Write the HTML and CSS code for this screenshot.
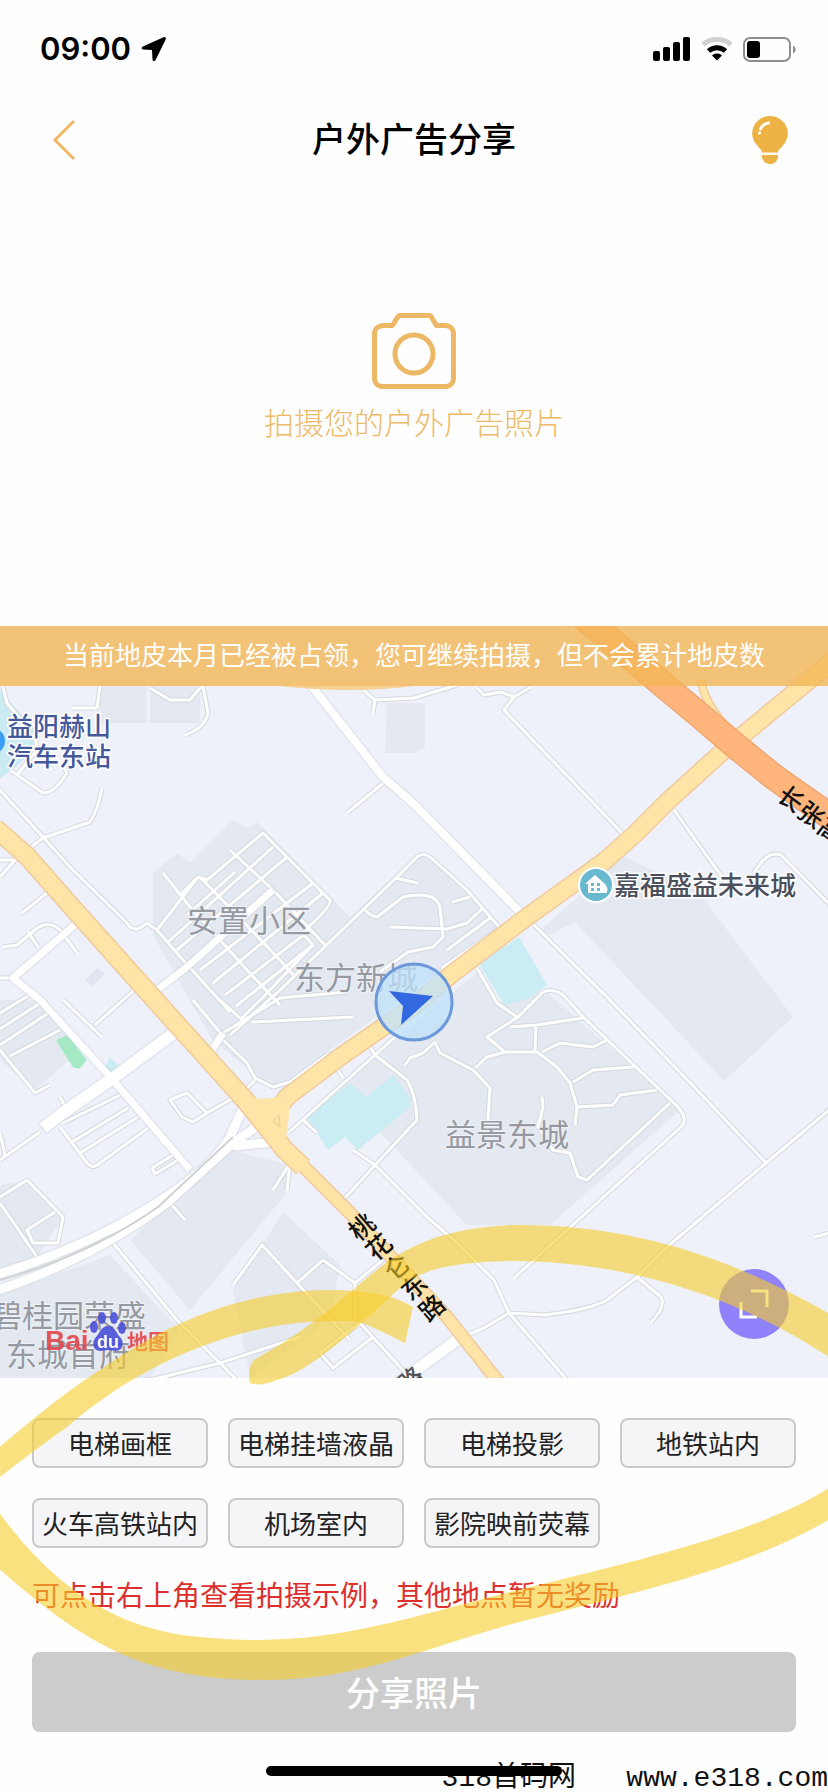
FILE: index.html
```html
<!DOCTYPE html>
<html lang="zh-CN">
<head>
  <meta charset="UTF-8">
  <meta name="viewport" content="width=device-width, initial-scale=1.0">
  <title>户外广告分享</title>
  <link rel="stylesheet" href="styles.css">
</head>
<body>
  <div class="page">

    <div class="status">
      <div class="status-left">
        <span class="status-time">09:00</span>
        <svg width="26" height="26" viewBox="0 0 26 26"><path d="M22.500 1.200 1.800 10.600c-1.700.8-1.400 2.900.4 3l8.800.3.500 9.600c.1 2 2.300 2.200 3.100.6L24.800 3.300c.6-1.500-.8-2.700-2.300-2.100z"/></svg>
      </div>
      <div class="status-right">
        <svg width="38" height="24" viewBox="0 0 38 24">
          <rect x="0" y="14" width="7" height="10" rx="2"/>
          <rect x="10" y="10" width="7" height="14" rx="2"/>
          <rect x="20" y="5" width="7" height="19" rx="2"/>
          <rect x="30" y="0" width="7" height="24" rx="2"/>
        </svg>
        <svg width="32" height="24" viewBox="0 0 32 24" fill="none" stroke-width="5">
          <path d="M2 7.500C10 .8 22 .8 30 7.500" stroke="#d0d0d0"/>
          <path d="M7.500 14c5-4.500 12-4.500 17 0" stroke="#000"/>
          <path d="M16 23.500l-5-5c3-2.600 7-2.600 10 0z" fill="#000"/>
        </svg>
        <svg width="53" height="25" viewBox="0 0 53 25">
          <rect x="1" y="1" width="46" height="23" rx="6" fill="none" stroke="#8e8e8e" stroke-width="2"/>
          <rect x="4" y="4" width="13" height="17" rx="3"/>
          <path d="M50 8.500c3.500 1.500 3.500 6.500 0 8z" fill="#8e8e8e"/>
        </svg>
      </div>
    </div>

    <header class="nav">
      <button type="button" class="nav-btn nav-btn--back" aria-label="返回">
        <svg width="24" height="42" viewBox="0 0 24 42"><path d="M22 2 3 21l19 19" fill="none" stroke="#edb866" stroke-width="3"/></svg>
      </button>
      <h1 class="nav-title">户外广告分享</h1>
      <button type="button" class="nav-btn nav-btn--tip" aria-label="拍摄示例">
        <svg width="36" height="48" viewBox="0 0 36 48">
          <path d="M18 0a17.500 17.500 0 0 0-12 30.500c2.500 2.500 3.800 3.500 4 6h16c.2-2.500 1.500-3.500 4-6A17.500 17.500 0 0 0 18 0z" fill="#edb244"/>
          <path d="M10 39h16c.5 4-2.500 9-8 9s-8.500-5-8-9z" fill="#edb244"/>
          <path d="M8.500 13c1.500-3.500 4-5.500 8-6" fill="none" stroke="#fff" stroke-width="3" stroke-linecap="round"/>
          <circle cx="7.500" cy="17" r="1.600" fill="#fff"/>
        </svg>
      </button>
    </header>

    <button type="button" class="shoot">
      <svg width="84" height="76" viewBox="0 0 84 76" fill="none" stroke="#edb866" stroke-width="5" stroke-linejoin="round">
        <path d="M12 12.500h8.500l5.500-9c.5-.8 1-1 2-1h29c1 0 1.500.2 2 1l5.500 9H73c5 0 8.500 3.500 8.500 8.500v44c0 5-3.500 8.500-8.500 8.500H11c-5 0-8.500-3.500-8.500-8.500V21c0-5 3.500-8.500 9.500-8.500z"/>
        <circle cx="42" cy="41" r="19"/>
      </svg>
      <span>拍摄您的户外广告照片</span>
    </button>

    <section class="map">
      <svg class="map-canvas" viewBox="0 626 828 752">
        <defs>
          <g id="lanes">
            <!-- 北侧 -->
            <path d="M534 925 607 997 697 1090 766 1163"/>
            <path d="M835 1105 766 1163 667 1247 637 1277 607 1300Q590 1310 544 1315L509 1313 484 1328 462 1337"/>
            <path d="M637 1277 661 1297Q666 1307 651 1322"/>
            <path d="M353 1150 375 1165 427 1217 457 1243 494 1280 509 1313 567 1380"/>
            <path d="M514 1278 681 1127Q690 1118 674 1103L583 1017 563 995Q553 988 543 992L518 1017 487 1037 505 1052 537 1052 557 1067 570 1083 577 1107 575 1125"/>
            <path d="M477 968 497 1003 517 1017M583 1018 537 1025 510 1027M536 1027 535 1052M542 1052 560 1043 593 1047 607 1040M573 1082 593 1070 633 1067M577 1107 613 1105 620 1095 657 1090"/>
            <path d="M505 1052 487 1057 475 1068M435 1042 440 1053 473 1070 490 1088 488 1120M435 1042 423 1053 410 1058 405 1065"/>
            <path d="M542 1097 543 1107 538 1127 553 1150 570 1153 578 1177 587 1180 670 1103"/>
            <path d="M370 1047 375 1055 407 1080Q416 1095 417 1120L377 1163 345 1198M395 1037 288 1133M338 1070 343 1078M303 1120 317 1133"/>
            <path d="M363 690 375 700 414 698 457 685M375 700 373 713M387 780 347 813"/>
            <path d="M477 688 484 695 501 692 514 697 531 687M514 697 504 710 622 833"/>
            <path d="M674 810 717 870 732 890M754 873Q767 850 781 855L835 910M814 1237 830 1233"/>
            <!-- 东方新城 -->
            <path d="M230 1035 280 990 397 877 417 857Q423 852 430 857L467 890 500 928M395 878 418 883"/>
            <path d="M365 910Q375 920 380 915L403 897Q435 890 440 907L443 937 433 947 408 952 380 972M390 927 447 929 467 923 483 908M452 902 470 897M447 950 490 918M442 968 497 930"/>
            <path d="M223 1033 280 998 347 992M252 1022 353 1017M223 1040 247 1063 255 1078 273 1087 290 1082 327 1055 340 1052M193 1000 222 1035M220 1000 240 1018M247 1088 255 1080"/>
            <!-- 安置小区 -->
            <path d="M157 930 198 877 207 880 263 833 273 843 330 900Q333 905 302 933L313 945 267 993 240 1020"/>
            <path d="M163 873 190 907 247 970 280 1005M230 850 273 890 325 945M200 877 280 960 293 975M198 877 180 895"/>
            <path d="M167 943 273 847M177 950 287 857M187 915 235 872M200 970 313 883M213 983 323 893M225 995 310 930M236 1006 313 945"/>
            <path d="M-3 787 43 837 70 867 127 923Q134 935 147 923L157 930 183 960 230 1012"/>
            <!-- 西北 -->
            <path d="M27 850 43 838 90 822Q98 810 102 788M10 770 43 793Q55 793 67 773L60 760M17 775 37 750 35 735M3 687 7 703 27 727M72 708H97L100 686M150 688 170 700H190L202 686M203 686 208 713Q205 728 185 735"/>
            <path d="M3 947 17 945 37 928Q50 920 60 930L77 953M22 913 47 893M0 877 17 858M0 860H14M0 978H13M28 932 38 947"/>
            <!-- 西南 -->
            <path d="M0 1013 28 996M0 1029 42 1002M0 1045 50 1012M10 1056 60 1030M0 1050 35 1093 50 1085M40 1132 0 1160M0 1133 5 1155M60 1097 67 1110"/>
            <path d="M60 1127 87 1163Q93 1170 100 1163L148 1128M63 1123 120 1095M72 1142 128 1108M80 1153 138 1117M63 1000 102 1037M95 1025 140 985"/>
            <path d="M170 1100 187 1093 207 1113 193 1122 182 1117zM207 1113 233 1098M173 1155 152 1168 155 1174 178 1160"/>
            <path d="M0 1197 27 1180 63 1217 58 1243 33 1243 27 1230 55 1212M0 1203 37 1257M113 1243 177 1320 237 1380M170 1203 185 1220"/>
            <path d="M150 1380 220 1363 300 1337M233 1285 262 1245 297 1283 350 1340M297 1283 323 1260 355 1283 383 1260M355 1283V1320M360 1323 320 1353 333 1368 373 1337M360 1323 410 1378"/>
            <path d="M273 1190 290 1163 287 1190"/>
          </g>
          <g id="streets">
            <path d="M310 684 383 777 414 804 521 913" stroke-width="8"/>
            <path d="M157 990 187 967 273 890M77 923 13 978 40 1000 113 1080 190 1170M212 1050 223 1033" stroke-width="7"/>
            <path d="M457 1340 400 1382" stroke-width="11"/>
            <path d="M178 1030 113 1078 67 1110 43 1128" stroke-width="12"/>
            <path d="M-5 1275Q80 1250 150 1207T233 1130L247 1100M-5 1291Q90 1260 167 1203L233 1143 262 1123M233 1146 275 1142" stroke-width="9"/>
          </g>
        </defs>

        <rect y="626" width="828" height="752" fill="#eef1fa"/>

        <!-- 地块 -->
        <g fill="#e4e8f0">
          <path d="M153 873 177 853 190 863 233 820 247 828 257 822 350 917 417 855H430L500 928 330 1050 275 1090 212 1040 153 935z"/>
          <path d="M395 1040 480 970 497 1003 545 990 680 1110 550 1225H467L340 1090z"/>
          <path d="M540 930 624 857 697 890 793 1017 724 1081 575 922 550 935z"/>
          <path d="M130 1240 230 1150 290 1165 285 1195 190 1310z"/>
          <path d="M0 1295 110 1255 180 1330 150 1378H0zM233 1290 283 1212 340 1265 330 1320 250 1378z"/>
          <path d="M100 680H147V723H100zM150 680H200V723H150zM387 703H425V747L414 753H385zM0 1185 27 1180 63 1217 37 1257 0 1270z"/>
          <path d="M0 1000H40L80 1050 35 1090 0 1060z"/>
        </g>
        <path d="M85 980l12-12 8 6-12 12z" fill="#e0e5f0"/>
        <path d="M0 690 35 730Q38 755 0 778z" fill="#cbebf2"/>
        <g fill="#c9edf3">
          <path d="M479 964 519 937 547 985 530 998 505 1006z"/>
          <path d="M306 1117 350 1083 367 1097 393 1075 410 1098V1107L358 1150 345 1137 328 1150z"/>
          <path d="M110 1058 119 1066 111 1072 105 1066z"/>
        </g>
        <path d="M58 1041 66 1037 85 1060 79 1067 74 1066z" fill="#a4e8c4" stroke="#a4e8c4" stroke-width="3" stroke-linejoin="round"/>

        <!-- 道路 -->
        <use href="#lanes" class="lane-edge"/>
        <use href="#lanes" class="lane"/>
        <use href="#streets" class="road road-edge"/>
        <use href="#streets" class="road road-fill"/>
        <path d="M0 1280Q90 1255 158 1207L233 1137" fill="none" stroke="#cfd2d2" stroke-width="2"/>
        <g class="road avenue-edge">
          <path d="M-5 828 27 856 70 905 155 1000 245 1100 285 1150 303 1167" stroke-width="20"/>
          <path d="M270 1120 287 1097 340 1057 415 1005 453 973 527 917 606 860 636 833 668 801 721 753 801 687 840 655" stroke-width="19"/>
          <path d="M295 1158 350 1213 447 1317 500 1384" stroke-width="14"/>
          <path d="M701 680Q705 710 745 745" stroke-width="9"/>
        </g>
        <path d="M240 1095Q265 1103 292 1093L289 1115 286 1138 265 1130z" fill="#fee4a6"/>
        <g class="road avenue-fill">
          <path d="M-5 828 27 856 70 905 155 1000 245 1100 285 1150 303 1167" stroke-width="17"/>
          <path d="M270 1120 287 1097 340 1057 415 1005 453 973 527 917 606 860 636 833 668 801 721 753 801 687 840 655" stroke-width="16"/>
          <path d="M295 1158 350 1213 447 1317 500 1384" stroke-width="11"/>
          <path d="M701 680Q705 710 745 745" stroke-width="6"/>
        </g>
        <path d="M273 1121 279 1115 280 1127z" fill="none" stroke="#f1c99c"/>
        <path d="M575 610 661 683 697 713 737 747 774 777 845 827" fill="none" stroke="#f0a672" stroke-width="27"/>
        <path d="M575 610 661 683 697 713 737 747 774 777 845 827" fill="none" stroke="#ffb57b" stroke-width="24"/>
        <path d="M280 686Q350 694 414 686z" fill="#f6cf94"/>

        <!-- 地名 -->
        <g class="area-name">
          <text x="187" y="932">安置小区</text>
          <text x="294" y="989">东方新城</text>
          <text x="445" y="1146">益景东城</text>
          <text x="-9" y="1327">碧桂园荣盛</text>
          <text x="6" y="1366">东城首府</text>
        </g>
        <circle cx="-8" cy="741" r="13" fill="#3d9df5"/>
        <g class="poi-name poi-name--station">
          <text x="7" y="736">益阳赫山</text>
          <text x="7" y="766">汽车东站</text>
        </g>
        <circle cx="596" cy="885" r="17" fill="#68b9d0" stroke="#fff" stroke-width="2"/>
        <path d="M585 884 595 875 605 884 607 887V893H588V884zM604 886q6 2 2 7" fill="#fff"/>
        <path d="M591 883h3v3h-3zM597 883h3v3h-3zM591 888h3v3h-3zM597 888h3v3h-3z" fill="#68b9d0"/>
        <text class="poi-name" x="614" y="895">嘉福盛益未来城</text>
        <g class="road-name">
          <text transform="translate(362 1227) rotate(-41)">桃</text>
          <text transform="translate(379 1247) rotate(-41)">花</text>
          <text transform="translate(397 1267) rotate(-41)">仑</text>
          <text transform="translate(414 1287) rotate(-41)">东</text>
          <text transform="translate(432 1308) rotate(-41)">路</text>
          <text transform="translate(411 1380) rotate(-41)" fill="#555">路</text>
          <text transform="translate(791 799) rotate(37)">长</text>
          <text transform="translate(811 815) rotate(37)">张</text>
          <text transform="translate(831 831) rotate(37)">高</text>
        </g>

        <!-- 当前位置 -->
        <circle cx="414" cy="1002" r="38" fill="#bfe2fb" fill-opacity=".75" stroke="#6c98dc" stroke-width="3"/>
        <path d="M389 991 433 996 401 1025 403 1006z" fill="#3268e0"/>

        <!-- 百度地图 -->
        <g class="baidu">
          <text x="45" y="1350" font-size="28">Bai</text>
          <g fill="#4b50d8">
            <ellipse cx="94" cy="1327" rx="4" ry="6"/>
            <ellipse cx="102" cy="1318" rx="4" ry="6"/>
            <ellipse cx="114" cy="1318" rx="4" ry="6"/>
            <ellipse cx="122" cy="1328" rx="4" ry="6"/>
            <path d="M108 1326c7 0 8 7 12 11 5 5 3 14-4 14-3 0-5-1-8-1s-5 1-8 1c-7 0-9-9-4-14 4-4 5-11 12-11z"/>
          </g>
          <text x="97" y="1348" font-size="18" fill="#fff">du</text>
          <text x="127" y="1349" font-size="21">地图</text>
        </g>
      </svg>

      <p class="notice">当前地皮本月已经被占领，您可继续拍摄，但不会累计地皮数</p>

      <button type="button" class="map-expand" aria-label="全屏">
        <svg width="32" height="32" viewBox="0 0 32 32" fill="none" stroke="#fff" stroke-width="3"><path d="M13 3h16v16M3 14v15h16"/></svg>
      </button>
    </section>

    <section class="panel">
      <div class="types">
        <button type="button" class="type">电梯画框</button>
        <button type="button" class="type">电梯挂墙液晶</button>
        <button type="button" class="type">电梯投影</button>
        <button type="button" class="type">地铁站内</button>
        <button type="button" class="type">火车高铁站内</button>
        <button type="button" class="type">机场室内</button>
        <button type="button" class="type">影院映前荧幕</button>
      </div>
      <p class="tip">可点击右上角查看拍摄示例，其他地点暂无奖励</p>
      <button type="button" class="submit">分享照片</button>
    </section>

    <footer class="foot">
      <span class="watermark">318首码网   www.e318.com</span>
      <span class="home-bar"></span>
    </footer>

    <!-- 手绘圈 -->
    <svg class="marker" viewBox="0 0 828 1792">
      <path d="M250 1383Q247 1368 254 1360C290 1340 325 1315 353 1290C385 1262 420 1228 514 1225C640 1224 740 1262 835 1317V1361C740 1297 630 1262 514 1261C440 1262 414 1274 400 1288C360 1325 310 1372 277 1380Q260 1387 250 1383z"/>
      <path d="M413 1307 405 1343Q380 1330 360 1322C300 1316 180 1330 67 1427Q25 1457-5 1481V1451Q60 1395 100 1370C170 1320 250 1288 340 1290Q390 1292 413 1307z"/>
      <path d="M-5 1507C30 1555 90 1628 200 1637C330 1650 400 1618 547 1583C660 1555 770 1528 835 1484V1516C770 1555 700 1578 547 1615C440 1640 370 1680 267 1680C150 1680 90 1650-5 1565z"/>
    </svg>
  </div>
</body>
</html>
```
FILE: styles.css
```css
*{box-sizing: border-box;}
html,body{margin: 0; padding: 0; background-color: #fefefe;}
body{
  font-family: Inter, "Noto Sans CJK SC", sans-serif;
  color: #222;
}
button{
  font-family: inherit;
  padding: 0;
  border: 0;
  background: none;
  cursor: pointer;
}
svg{display: block;}

.page{
  position: relative;
  display: flex;
  flex-direction: column;
  min-height: 100vh;
  overflow: hidden;
}

/* status bar */
.status{
  display: flex;
  align-items: center;
  justify-content: space-between;
  height: 98px;
  padding: 0 32px 0 40px;
  color: #000;
}
.status-left,
.status-right{
  display: flex;
  align-items: center;
  gap: 10px;
}
.status-time{font-size: 31px; font-weight: 600; line-height: 40px;}

/* nav */
.nav{
  display: flex;
  align-items: center;
  justify-content: space-between;
  height: 84px;
  padding: 0 40px;
}
.nav-btn{
  display: flex;
  width: 48px;
}
.nav-btn--back{padding-left: 12px;}
.nav-btn--tip{justify-content: flex-end;}
.nav-title{
  margin: 0;
  font-size: 34px;
  font-weight: 500;
  line-height: 48px;
  color: #000;
}

/* photo */
.shoot{
  display: flex;
  flex-direction: column;
  align-items: center;
  gap: 12px;
  min-height: 444px;
  padding-top: 131px;
  font-size: 30px;
  font-weight: 300;
  line-height: 44px;
  color: #edba68;
}

/* map */
.map{position: relative;}
.map-canvas{width: 100%; height: auto;}
.notice{
  position: absolute;
  top: 0;
  left: 0;
  right: 0;
  margin: 0;
  font-size: 26px;
  line-height: 60px;
  text-align: center;
  color: #fff;
  background-color: rgba(243, 182, 86, 0.8);
}
.map-expand{
  position: absolute;
  right: 39px;
  bottom: 39px;
  display: flex;
  align-items: center;
  justify-content: center;
  width: 70px;
  height: 70px;
  border-radius: 50%;
  background-color: #8f82fb;
}
.lane-edge{fill: none; stroke: #d4d8df; stroke-width: 5px; stroke-linejoin: round;}
.lane{fill: none; stroke: #fff; stroke-width: 3px; stroke-linejoin: round;}
.road{fill: none; stroke-linejoin: round;}
.road-edge{stroke: #d0d4dc; filter: drop-shadow(0 0 1px #c4c8d0);}
.road-fill{stroke: #fff;}
.avenue-edge{stroke: #f1c99c;}
.avenue-fill{stroke: #fee4a6;}
.area-name{
  font-size: 31px;
  fill: #9699a1;
  stroke: #eef1f6;
  stroke-width: 2px;
  paint-order: stroke;
}
.poi-name{
  font-size: 26px;
  font-weight: 500;
  fill: #4c4f5c;
  stroke: #fff;
  stroke-width: 3px;
  paint-order: stroke;
}
.poi-name--station{fill: #43599c;}
.road-name{
  font-size: 25px;
  font-weight: 500;
  fill: #111;
  text-anchor: middle;
  dominant-baseline: central;
}
.baidu{
  font-family: "Liberation Sans", "Noto Sans CJK SC", sans-serif;
  font-weight: 700;
  fill: #e2474d;
  opacity: .9;
}

/* panel */
.panel{padding: 40px 32px 0;}
.types{
  display: grid;
  grid-template-columns: repeat(4, 1fr);
  gap: 30px 20px;
}
.type{
  height: 50px;
  padding-bottom: 2px;
  border: 2px solid #c9c9cb;
  border-radius: 8px;
  background-color: #f5f5f8;
  font-size: 26px;
  white-space: nowrap;
  color: #222;
}
.tip{
  margin: 26px 0 34px;
  font-size: 28px;
  line-height: 44px;
  color: #dd2f2c;
}
.submit{
  width: 100%;
  height: 80px;
  padding-bottom: 2px;
  border-radius: 8px;
  background-color: #ccc;
  font-size: 34px;
  font-weight: 500;
  color: #fff;
}

.foot{
  position: relative;
  display: flex;
  justify-content: center;
  height: 60px;
  padding-top: 34px;
}
.home-bar{
  position: relative;
  width: 296px;
  height: 10px;
  border-radius: 5px;
  background-color: #000;
}
.watermark{
  position: absolute;
  right: 0;
  bottom: 0;
  font-family: "Liberation Mono", "Noto Sans CJK SC", monospace;
  font-size: 28px;
  line-height: 26px;
  white-space: pre;
  color: #111;
}

.marker{
  position: absolute;
  top: 0;
  left: 0;
  width: 100%;
  height: auto;
  fill: rgb(247, 205, 42);
  fill-opacity: .6;
  pointer-events: none;
}
```
